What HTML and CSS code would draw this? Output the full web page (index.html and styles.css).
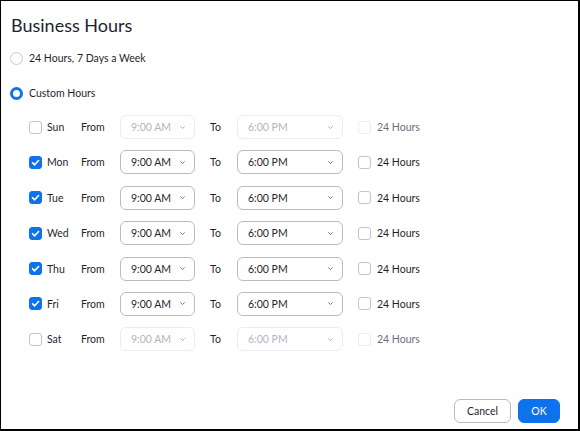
FILE: index.html
```html
<!DOCTYPE html>
<html>
<head>
<meta charset="utf-8">
<link rel="stylesheet" href="styles.css">
</head>
<body>
<div class="frame">
  <h1 class="title">Business Hours</h1>
  <label class="radio-row first"><span class="radio"></span><span>24 Hours, 7 Days a Week</span></label>
  <label class="radio-row second"><span class="radio on"></span><span>Custom Hours</span></label>

  <div class="grid">
    <div class="row off">
      <span class="cb"></span><span class="day">Sun</span><span class="lbl">From</span>
      <span class="sel s1"><span>9:00 AM</span><svg viewBox="0 0 8 5"><path d="M1.5 1.2l2.5 2.5 2.5-2.5"/></svg></span>
      <span class="lbl to">To</span>
      <span class="sel s2"><span>6:00 PM</span><svg viewBox="0 0 8 5"><path d="M1.5 1.2l2.5 2.5 2.5-2.5"/></svg></span>
      <span class="cb c24"></span><span class="h24">24 Hours</span>
    </div>
    <div class="row">
      <span class="cb on"><svg viewBox="0 0 10 10"><path d="M2.3 5.2l1.9 1.9 3.6-3.9"/></svg></span><span class="day">Mon</span><span class="lbl">From</span>
      <span class="sel s1"><span>9:00 AM</span><svg viewBox="0 0 8 5"><path d="M1.5 1.2l2.5 2.5 2.5-2.5"/></svg></span>
      <span class="lbl to">To</span>
      <span class="sel s2"><span>6:00 PM</span><svg viewBox="0 0 8 5"><path d="M1.5 1.2l2.5 2.5 2.5-2.5"/></svg></span>
      <span class="cb c24"></span><span class="h24">24 Hours</span>
    </div>
    <div class="row">
      <span class="cb on"><svg viewBox="0 0 10 10"><path d="M2.3 5.2l1.9 1.9 3.6-3.9"/></svg></span><span class="day">Tue</span><span class="lbl">From</span>
      <span class="sel s1"><span>9:00 AM</span><svg viewBox="0 0 8 5"><path d="M1.5 1.2l2.5 2.5 2.5-2.5"/></svg></span>
      <span class="lbl to">To</span>
      <span class="sel s2"><span>6:00 PM</span><svg viewBox="0 0 8 5"><path d="M1.5 1.2l2.5 2.5 2.5-2.5"/></svg></span>
      <span class="cb c24"></span><span class="h24">24 Hours</span>
    </div>
    <div class="row">
      <span class="cb on"><svg viewBox="0 0 10 10"><path d="M2.3 5.2l1.9 1.9 3.6-3.9"/></svg></span><span class="day">Wed</span><span class="lbl">From</span>
      <span class="sel s1"><span>9:00 AM</span><svg viewBox="0 0 8 5"><path d="M1.5 1.2l2.5 2.5 2.5-2.5"/></svg></span>
      <span class="lbl to">To</span>
      <span class="sel s2"><span>6:00 PM</span><svg viewBox="0 0 8 5"><path d="M1.5 1.2l2.5 2.5 2.5-2.5"/></svg></span>
      <span class="cb c24"></span><span class="h24">24 Hours</span>
    </div>
    <div class="row">
      <span class="cb on"><svg viewBox="0 0 10 10"><path d="M2.3 5.2l1.9 1.9 3.6-3.9"/></svg></span><span class="day">Thu</span><span class="lbl">From</span>
      <span class="sel s1"><span>9:00 AM</span><svg viewBox="0 0 8 5"><path d="M1.5 1.2l2.5 2.5 2.5-2.5"/></svg></span>
      <span class="lbl to">To</span>
      <span class="sel s2"><span>6:00 PM</span><svg viewBox="0 0 8 5"><path d="M1.5 1.2l2.5 2.5 2.5-2.5"/></svg></span>
      <span class="cb c24"></span><span class="h24">24 Hours</span>
    </div>
    <div class="row">
      <span class="cb on"><svg viewBox="0 0 10 10"><path d="M2.3 5.2l1.9 1.9 3.6-3.9"/></svg></span><span class="day">Fri</span><span class="lbl">From</span>
      <span class="sel s1"><span>9:00 AM</span><svg viewBox="0 0 8 5"><path d="M1.5 1.2l2.5 2.5 2.5-2.5"/></svg></span>
      <span class="lbl to">To</span>
      <span class="sel s2"><span>6:00 PM</span><svg viewBox="0 0 8 5"><path d="M1.5 1.2l2.5 2.5 2.5-2.5"/></svg></span>
      <span class="cb c24"></span><span class="h24">24 Hours</span>
    </div>
    <div class="row off">
      <span class="cb"></span><span class="day">Sat</span><span class="lbl">From</span>
      <span class="sel s1"><span>9:00 AM</span><svg viewBox="0 0 8 5"><path d="M1.5 1.2l2.5 2.5 2.5-2.5"/></svg></span>
      <span class="lbl to">To</span>
      <span class="sel s2"><span>6:00 PM</span><svg viewBox="0 0 8 5"><path d="M1.5 1.2l2.5 2.5 2.5-2.5"/></svg></span>
      <span class="cb c24"></span><span class="h24">24 Hours</span>
    </div>
  </div>

  <div class="footer">
    <button class="btn cancel">Cancel</button>
    <button class="btn ok">OK</button>
  </div>
</div>
</body>
</html>
```
FILE: styles.css
```css
* { box-sizing: border-box; }
html, body { margin: 0; padding: 0; background: #fff; }
body {
  font-family: Lato, "Open Sans", sans-serif;
  color: #1f1f2e;
  font-size: 10.5px;
}
.frame {
  width: 580px;
  height: 431px;
  border-style: solid;
  border-color: #000;
  border-width: 1px 2px 2px 1px;
  display: flex;
  flex-direction: column;
  padding: 0 0 0 9px;
}
.title {
  margin: 10px 0 0 1px;
  font-size: 18px;
  font-weight: 400;
  line-height: 28px;
  color: #1f1f2e;
}
.radio-row {
  display: flex;
  align-items: center;
  gap: 6px;
  height: 16px;
}
.radio-row.first { margin-top: 11px; }
.radio-row.second { margin-top: 19px; }
.radio {
  width: 13px;
  height: 13px;
  border-radius: 50%;
  border: 1px solid #c9c9d1;
  background: #fff;
  flex: none;
}
.radio.on {
  border: 3.5px solid #0e72ed;
}
.grid {
  margin: 14px 0 0 19px;
  display: flex;
  flex-direction: column;
  gap: 11.4px;
}
.row {
  display: grid;
  grid-template-columns: 18px 34px 39px 75px 15px 27px 106px 15px 19px auto;
  align-items: center;
  height: 24px;
}
.row .to { grid-column: 6; }
.row .sel.s2 { grid-column: 7; }
.row .c24 { grid-column: 9; }
.cb {
  width: 13px;
  height: 13px;
  border-radius: 3px;
  border: 1px solid #c4c4cc;
  background: #fff;
  display: flex;
  align-items: center;
  justify-content: center;
}
.cb.on {
  background: #0e72ed;
  border-color: #0e72ed;
}
.cb svg { width: 11px; height: 11px; }
.cb svg path { fill: none; stroke: #fff; stroke-width: 1.5; stroke-linecap: round; stroke-linejoin: round; }
.day, .lbl { color: #1f1f2e; }
.sel {
  height: 24px;
  border: 1px solid #babac4;
  border-radius: 6px;
  display: flex;
  align-items: center;
  justify-content: space-between;
  padding: 0 8px 0 10px;
  color: #1f1f2e;
}
.sel svg { width: 7px; height: 5px; }
.sel svg path { fill: none; stroke: #747487; stroke-width: 1.1; }
.h24 { color: #1f1f2e; }
.row.off .sel { border-color: #ececf0; color: #b4b4c0; }
.row.off .sel svg path { stroke: #a8a8b6; }
.row.off .c24 { border-color: #ececf0; }
.row.off .h24 { color: #6e6e7e; }
.footer {
  margin-top: auto;
  margin-bottom: 6px;
  display: flex;
  justify-content: flex-end;
  gap: 7px;
  padding-right: 18px;
}
.btn {
  height: 24px;
  border-radius: 6px;
  font-family: Lato, "Open Sans", sans-serif;
  font-size: 10.5px;
  padding: 0;
}
.cancel {
  width: 57px;
  background: #fff;
  border: 1px solid #babac4;
  color: #1f1f2e;
}
.ok {
  width: 42px;
  background: #0e72ed;
  border: 1px solid #0e72ed;
  color: #fff;
}
```
